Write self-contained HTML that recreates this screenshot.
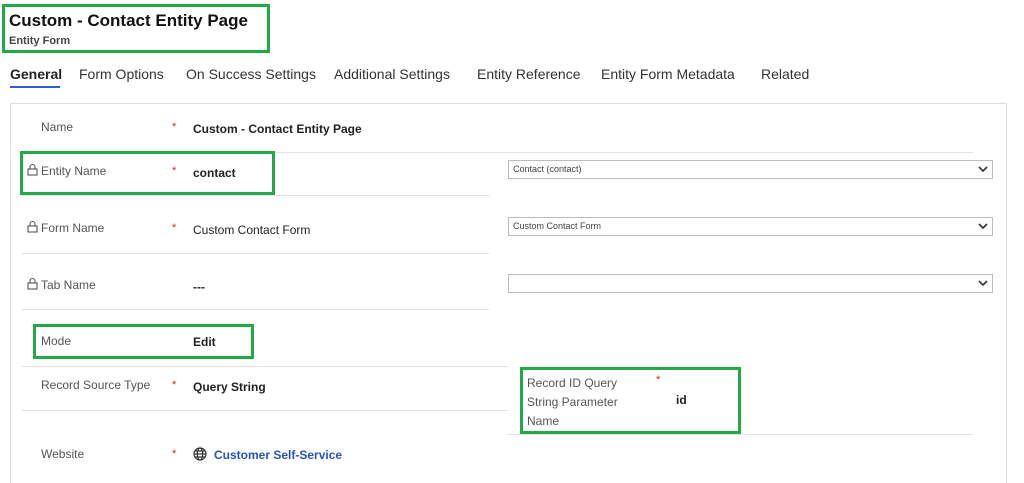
<!DOCTYPE html>
<html><head><style>
*{margin:0;padding:0;box-sizing:border-box}
body{width:1024px;height:475px;background:#fff;font-family:"Liberation Sans",sans-serif;position:relative;overflow:hidden;color:#333}
.a{position:absolute;white-space:nowrap}
.g{position:absolute;border:3px solid #22aa44}
.ln{position:absolute;height:1px;background:#e2e2e2}
.lab{font-size:12px;color:#555}
.req{color:#d22;font-size:11px}
.val{font-size:12px;font-weight:bold;color:#222}
.dd{position:absolute;left:508px;width:485px;height:19px;border:1px solid #bbb;font-size:9px;color:#444;padding:3px 4px}
.dd svg{position:absolute;right:4px;top:5px}
.tab{font-size:14px;color:#333;top:66px}
.lk{position:absolute;left:27px}
</style></head><body>
<div class="g" style="left:2px;top:4px;width:268px;height:49px"></div>
<div class="a" style="left:9px;top:11px;font-size:17px;font-weight:bold;color:#111">Custom - Contact Entity Page</div>
<div class="a" style="left:9px;top:35px;font-size:11px;font-weight:bold;color:#444">Entity Form</div>
<div class="a tab" style="left:10px;font-weight:bold;color:#222">General</div>
<div style="position:absolute;left:10px;top:86px;width:50px;height:2px;background:#2f5fd0"></div>
<div class="a tab" style="left:79px">Form Options</div>
<div class="a tab" style="left:186px">On Success Settings</div>
<div class="a tab" style="left:334px">Additional Settings</div>
<div class="a tab" style="left:477px">Entity Reference</div>
<div class="a tab" style="left:601px">Entity Form Metadata</div>
<div class="a tab" style="left:761px">Related</div>
<div style="position:absolute;left:10px;top:103px;width:997px;height:380px;border:1px solid #ddd;border-bottom:none"></div>
<div class="ln" style="left:22px;top:152px;width:951px"></div>
<div class="ln" style="left:22px;top:195px;width:467px"></div>
<div class="ln" style="left:22px;top:253px;width:467px"></div>
<div class="ln" style="left:22px;top:309px;width:467px"></div>
<div class="ln" style="left:22px;top:366px;width:486px"></div>
<div class="ln" style="left:22px;top:410px;width:486px"></div>
<div class="ln" style="left:507px;top:434px;width:466px"></div>

<div class="a lab" style="left:41px;top:120px">Name</div><div class="a req" style="left:172px;top:121px">*</div><div class="a val" style="left:193px;top:122px">Custom - Contact Entity Page</div>

<div class="g" style="left:20px;top:151px;width:255px;height:44px"></div>
<svg class="lk" style="top:163px" width="11" height="13" viewBox="0 0 11 13"><g fill="none" stroke="#555" stroke-width="1.1"><rect x="1" y="6" width="9" height="6"/><path d="M3 6V4a2.5 2.5 0 0 1 5 0v2"/></g></svg>
<div class="a lab" style="left:41px;top:164px">Entity Name</div><div class="a req" style="left:172px;top:165px">*</div><div class="a val" style="left:193px;top:166px">contact</div>
<div class="dd" style="top:160px">Contact (contact)<svg width="10" height="7"><path d="M1 1l4 4 4-4" stroke="#333" stroke-width="1.6" fill="none"/></svg></div>

<svg class="lk" style="top:220px" width="11" height="13" viewBox="0 0 11 13"><g fill="none" stroke="#555" stroke-width="1.1"><rect x="1" y="6" width="9" height="6"/><path d="M3 6V4a2.5 2.5 0 0 1 5 0v2"/></g></svg>
<div class="a lab" style="left:41px;top:221px">Form Name</div><div class="a req" style="left:172px;top:222px">*</div><div class="a val" style="left:193px;top:223px;font-weight:normal;color:#222">Custom Contact Form</div>
<div class="dd" style="top:217px">Custom Contact Form<svg width="10" height="7"><path d="M1 1l4 4 4-4" stroke="#333" stroke-width="1.6" fill="none"/></svg></div>

<svg class="lk" style="top:277px" width="11" height="13" viewBox="0 0 11 13"><g fill="none" stroke="#555" stroke-width="1.1"><rect x="1" y="6" width="9" height="6"/><path d="M3 6V4a2.5 2.5 0 0 1 5 0v2"/></g></svg>
<div class="a lab" style="left:41px;top:278px">Tab Name</div><div class="a val" style="left:193px;top:280px">---</div>
<div class="dd" style="top:274px"><svg width="10" height="7"><path d="M1 1l4 4 4-4" stroke="#333" stroke-width="1.6" fill="none"/></svg></div>

<div class="g" style="left:33px;top:324px;width:221px;height:35px"></div>
<div class="a lab" style="left:41px;top:334px">Mode</div><div class="a val" style="left:193px;top:335px">Edit</div>

<div class="a lab" style="left:41px;top:378px">Record Source Type</div><div class="a req" style="left:172px;top:379px">*</div><div class="a val" style="left:193px;top:380px">Query String</div>

<div class="g" style="left:520px;top:367px;width:221px;height:67px"></div>
<div class="a lab" style="left:527px;top:374px;line-height:19px">Record ID Query<br>String Parameter<br>Name</div>
<div class="a req" style="left:656px;top:374px">*</div><div class="a val" style="left:676px;top:393px">id</div>

<div class="a lab" style="left:41px;top:447px">Website</div><div class="a req" style="left:172px;top:448px">*</div>
<svg class="a" style="left:193px;top:447px" width="14" height="14" viewBox="0 0 14 14"><g fill="none" stroke="#333" stroke-width="1.2"><circle cx="7" cy="7" r="6"/><ellipse cx="7" cy="7" rx="2.7" ry="6"/><path d="M1 7h12M2 4h10M2 10h10"/></g></svg>
<div class="a val" style="left:214px;top:448px;color:#2a52be">Customer Self-Service</div>
</body></html>
